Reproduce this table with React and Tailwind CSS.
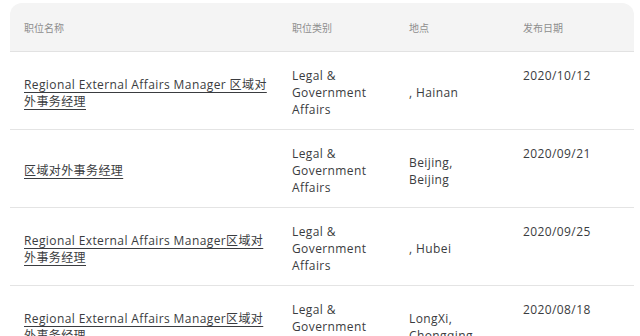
const jobs = [
    {title: "Regional External Affairs Manager 区域对外事务经理", category: "Legal & Government Affairs", location: ", Hainan", date: "2020/10/12"},
    {title: "区域对外事务经理", category: "Legal & Government Affairs", location: "Beijing, Beijing", date: "2020/09/21"},
    {title: "Regional External Affairs Manager区域对外事务经理", category: "Legal & Government Affairs", location: ", Hubei", date: "2020/09/25"},
    {title: "Regional External Affairs Manager区域对外事务经理", category: "Legal & Government Affairs", location: "LongXi, Chongqing", date: "2020/08/18"},
]

const font = {fontFamily: '"Open Sans", "Noto Sans CJK SC", sans-serif'}

export default function App() {
    return (
        <div className="w-[640px] h-[336px] overflow-hidden bg-white pt-[3px] pl-[10px] pr-[6px]" style={font}>
            <div className="rounded-t-[12px] overflow-hidden">
                <div className="grid grid-cols-[268px_117px_114px_1fr] h-[49px] items-center bg-[#f4f4f4] border-b border-[#e2e2e2] text-[10px] text-[#8e8e8e]">
                    <div className="pl-[14px] pt-[2px]">职位名称</div>
                    <div className="pl-[14px] pt-[2px]">职位类别</div>
                    <div className="pl-[14px] pt-[2px]">地点</div>
                    <div className="pl-[14px] pt-[2px]">发布日期</div>
                </div>
                {jobs.map((job, i) => (
                    <div key={i} className="grid grid-cols-[268px_117px_114px_1fr] border-b border-[#e4e4e4] pt-[15px] pb-[11px] text-[12px] leading-[17px] tracking-[0.4px] text-[#3a3c40]">
                        <div className="self-center pl-[14px] pr-[10px]">
                            <span className="underline underline-offset-[3px] decoration-[1px]">{job.title}</span>
                        </div>
                        <div className="pl-[14px] pr-[20px]">{job.category}</div>
                        <div className="self-center pl-[14px] pr-[30px]">{job.location}</div>
                        <div className="pl-[14px]">{job.date}</div>
                    </div>
                ))}
            </div>
        </div>
    )
}
